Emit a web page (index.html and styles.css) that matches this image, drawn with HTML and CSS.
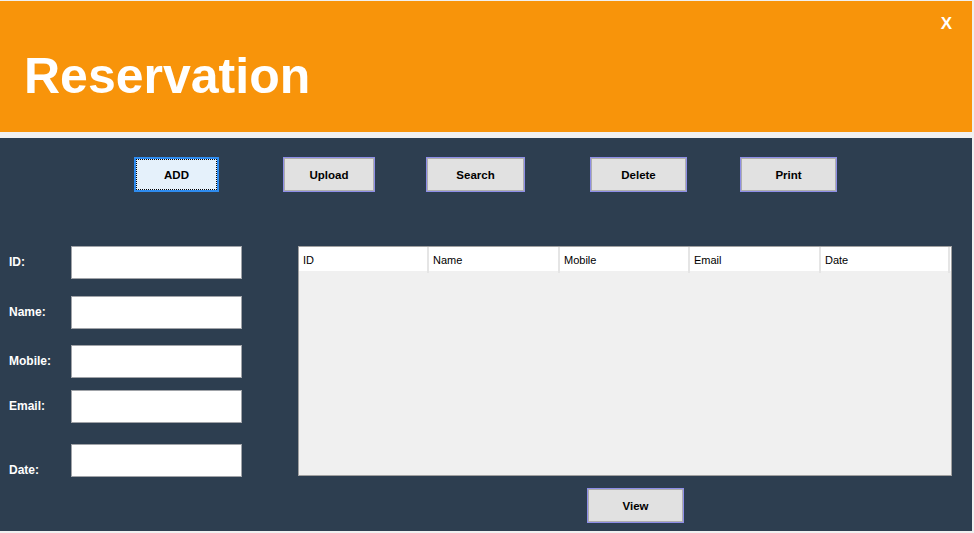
FILE: index.html
```html
<!DOCTYPE html>
<html lang="en">
<head>
<meta charset="utf-8">
<title>Reservation</title>
<link rel="stylesheet" href="styles.css">
</head>
<body>
<div class="window">
  <header class="header">
    <h1 class="title">Reservation</h1>
    <span class="close">X</span>
  </header>
  <main class="main">
    <div class="toolbar">
      <button class="btn btn-focus b-add">ADD</button>
      <button class="btn b-upload">Upload</button>
      <button class="btn b-search">Search</button>
      <button class="btn b-delete">Delete</button>
      <button class="btn b-print">Print</button>
    </div>
    <div class="content">
      <form class="form">
        <label class="lbl">ID:</label><input class="field" type="text">
        <label class="lbl">Name:</label><input class="field" type="text">
        <label class="lbl">Mobile:</label><input class="field" type="text">
        <label class="lbl">Email:</label><input class="field" type="text">
        <label class="lbl lbl-date">Date:</label><input class="field" type="text">
      </form>
      <section class="grid-area">
        <div class="table">
          <div class="thead">
            <div class="th">ID</div>
            <div class="th">Name</div>
            <div class="th">Mobile</div>
            <div class="th">Email</div>
            <div class="th">Date</div>
          </div>
        </div>
        <button class="btn b-view">View</button>
      </section>
    </div>
  </main>
</div>
</body>
</html>
```

FILE: styles.css
```css
* { box-sizing: border-box; }

html, body {
  margin: 0;
  padding: 0;
  background: #f0f0f0;
}

body {
  font-family: "Liberation Sans", Arial, sans-serif;
}

.window {
  width: 972px;
  padding-top: 1px;
}

.header {
  height: 131px;
  background: #f8940a;
  display: flex;
  justify-content: space-between;
  align-items: flex-start;
  padding: 0 20px 0 25px;
}

.title {
  margin: 50px 0 0 -1px;
  font-size: 50px;
  line-height: 50px;
  font-weight: bold;
  color: #ffffff;
}

.close {
  margin-top: 14px;
  font-size: 17px;
  line-height: 17px;
  font-weight: bold;
  color: #ffffff;
}

.main {
  margin-top: 6px;
  height: 393px;
  background: #2d3e50;
  padding-top: 19px;
}

.toolbar {
  display: flex;
  padding-left: 134px;
}

.btn {
  height: 35px;
  padding: 0;
  background: #e1e1e1;
  border: 1px solid #8e8ee8;
  box-shadow: inset 0 0 0 1px #adadad;
  font-family: "Liberation Sans", Arial, sans-serif;
  font-size: 11.5px;
  font-weight: bold;
  color: #000000;
}

.btn-focus {
  background: #e5f1fb;
  border: 2px solid #2e8cf0;
  box-shadow: none;
  outline: 1px dotted #000000;
  outline-offset: -3px;
}

.b-add { width: 85px; }
.b-upload { width: 92px; margin-left: 64px; }
.b-search { width: 99px; margin-left: 51px; }
.b-delete { width: 97px; margin-left: 65px; }
.b-print { width: 97px; margin-left: 53px; }

.content {
  display: flex;
  margin-top: 54px;
}

.form {
  display: grid;
  grid-template-columns: 62px 171px;
  grid-template-rows: 50px 49px 45px 54px 33px;
  padding-left: 9px;
  margin: 0;
}

.lbl {
  font-size: 12px;
  font-weight: bold;
  line-height: 32px;
  color: #ffffff;
}

.lbl-date {
  padding-top: 10px;
}

.field {
  width: 171px;
  height: 33px;
  margin: 0;
  border: 1px solid #a0a3a8;
  background: #ffffff;
}

.grid-area {
  margin-left: 56px;
  display: flex;
  flex-direction: column;
}

.table {
  width: 654px;
  height: 230px;
  border: 1px solid #a0a0a0;
  background: #f0f0f0;
}

.thead {
  display: grid;
  grid-template-columns: 130px 131px 130px 131px 129px;
  height: 24px;
  background: #ffffff;
}

.th {
  border-right: 2px solid #e5e5e5;
  padding-left: 4px;
  font-size: 11px;
  line-height: 26px;
  color: #000000;
}

.b-view {
  width: 97px;
  margin: 12px 0 0 289px;
}
```
